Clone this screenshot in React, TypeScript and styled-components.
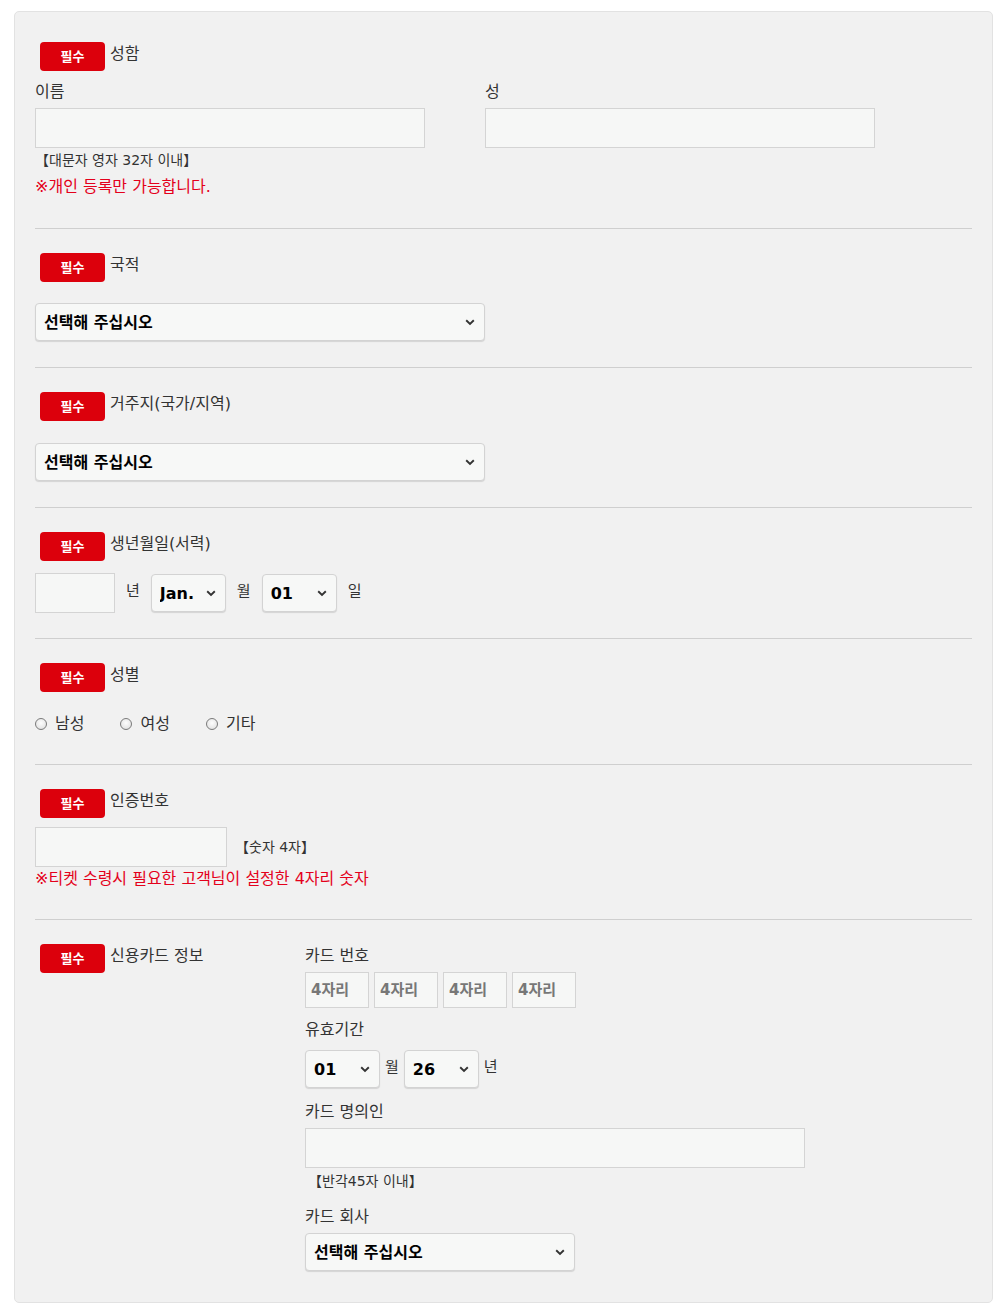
import React from "react";
import styled, { createGlobalStyle } from "styled-components";

const GlobalStyle = createGlobalStyle`
  body {
    margin: 0;
    background: #fff;
    font-family: "DejaVu Sans", "Noto Sans CJK KR", sans-serif;
    color: #333;
  }
`;

const Panel = styled.div`
  margin: 11px 10px 7px 14px;
  background: #f1f1f1;
  border: 1px solid #e2e2e2;
  border-radius: 5px;
  padding: 30px 20px 31px;
`;

const Section = styled.section<{ $top?: number; $bottom?: number }>`
  padding: ${(p) => p.$top ?? 24}px 0 ${(p) => p.$bottom ?? 26}px;
  border-bottom: 1px solid #cfcfcf;

  &:first-child {
    padding-top: 0;
  }
  &:last-child {
    border-bottom: none;
    padding-bottom: 0;
  }
`;

const Heading = styled.div`
  display: flex;
  align-items: flex-start;
  gap: 5px;
  padding-left: 5px;
`;

const Badge = styled.span`
  display: inline-flex;
  align-items: center;
  justify-content: center;
  box-sizing: border-box;
  width: 65px;
  height: 29px;
  padding-bottom: 2px;
  border-radius: 4px;
  background: #dc000c;
  color: #fff;
  font-size: 13px;
  font-weight: bold;
`;

const HeadingText = styled.span`
  font-size: 16px;
  line-height: 24px;
  color: #333;
`;

const Columns = styled.div`
  display: flex;
  gap: 60px;
`;

const Field = styled.div<{ $mt?: number }>`
  margin-top: ${(p) => p.$mt ?? 0}px;
`;

const Label = styled.div<{ $mt?: number }>`
  margin-top: ${(p) => p.$mt ?? 0}px;
  font-size: 16px;
  line-height: 20px;
  color: #333;
`;

const TextBox = styled.input<{ $w: number; $h?: number; $mt?: number }>`
  display: block;
  box-sizing: border-box;
  width: ${(p) => p.$w}px;
  height: ${(p) => p.$h ?? 40}px;
  margin-top: ${(p) => p.$mt ?? 0}px;
  background: #f6f7f6;
  border: 1px solid #d4d4d4;
  border-radius: 0;
  padding: 0 5px;
  font-family: inherit;
  font-size: 15px;
  font-weight: bold;
  color: #333;
  outline: none;

  &::placeholder {
    color: #777;
  }
`;

const Hint = styled.div<{ $mt?: number; $pl?: number }>`
  margin-top: ${(p) => p.$mt ?? 0}px;
  padding-left: ${(p) => p.$pl ?? 0}px;
  font-size: 14px;
  line-height: 20px;
  color: #333;
`;

const Notice = styled.div<{ $mt?: number }>`
  margin-top: ${(p) => p.$mt ?? 0}px;
  font-size: 16px;
  line-height: 20px;
  color: #e4001b;
`;

const SelectWrap = styled.div<{ $w: number; $mt?: number }>`
  position: relative;
  width: ${(p) => p.$w}px;
  height: 38px;
  margin-top: ${(p) => p.$mt ?? 0}px;
  flex: none;
`;

const SelectBox = styled.select`
  appearance: none;
  box-sizing: border-box;
  width: 100%;
  height: 100%;
  background: #f7f8f7;
  border: 1px solid #d3d3d3;
  border-radius: 4px;
  box-shadow: 0 1px 1px rgba(0, 0, 0, 0.12);
  padding: 0 24px 0 8px;
  font-family: inherit;
  font-size: 16px;
  font-weight: bold;
  color: #000;
  outline: none;
`;

const Chevron = styled.svg`
  position: absolute;
  right: 10px;
  top: 50%;
  margin-top: -3px;
  pointer-events: none;
`;

const Row = styled.div<{ $gap: number; $mt?: number }>`
  display: flex;
  align-items: center;
  gap: ${(p) => p.$gap}px;
  margin-top: ${(p) => p.$mt ?? 0}px;
`;

const Unit = styled.span`
  font-size: 15px;
  line-height: 20px;
  color: #333;
  margin-top: -4px;
`;

const RadioRow = styled.div`
  display: flex;
  gap: 36px;
  margin-top: 22px;
  line-height: 20px;
`;

const RadioItem = styled.label`
  display: flex;
  align-items: center;
  gap: 8px;
  font-size: 16px;
  color: #333;
`;

const RadioDot = styled.span`
  box-sizing: border-box;
  width: 12px;
  height: 12px;
  border-radius: 50%;
  border: 1px solid #7a7a7a;
  background: radial-gradient(circle at 50% 40%, #fdfdfd, #dcdcdc);
`;

const CardGrid = styled.div`
  display: grid;
  grid-template-columns: 270px 1fr;
`;

function Select({ value, width, mt }: { value: string; width: number; mt?: number }) {
  return (
    <SelectWrap $w={width} $mt={mt}>
      <SelectBox defaultValue={value}>
        <option>{value}</option>
      </SelectBox>
      <Chevron width="10" height="7" viewBox="0 0 10 7">
        <path d="M1.2 1.3 L5 5 L8.8 1.3" fill="none" stroke="#333" strokeWidth="1.9" />
      </Chevron>
    </SelectWrap>
  );
}

function Head({ text }: { text: string }) {
  return (
    <Heading>
      <Badge>필수</Badge>
      <HeadingText>{text}</HeadingText>
    </Heading>
  );
}

export default function App() {
  return (
    <>
      <GlobalStyle />
      <Panel>
        <Section $bottom={31}>
          <Head text="성함" />
          <Columns>
            <Field>
              <Label $mt={11}>이름</Label>
              <TextBox $w={390} $mt={6} />
            </Field>
            <Field>
              <Label $mt={11}>성</Label>
              <TextBox $w={390} $mt={6} />
            </Field>
          </Columns>
          <Hint $mt={2}>【대문자 영자 32자 이내】</Hint>
          <Notice $mt={7}>※개인 등록만 가능합니다.</Notice>
        </Section>

        <Section>
          <Head text="국적" />
          <Select value="선택해 주십시오" width={450} mt={21} />
        </Section>

        <Section>
          <Head text="거주지(국가/지역)" />
          <Select value="선택해 주십시오" width={450} mt={22} />
        </Section>

        <Section $bottom={25}>
          <Head text="생년월일(서력)" />
          <Row $gap={11} $mt={12}>
            <TextBox $w={80} />
            <Unit>년</Unit>
            <Select value="Jan." width={75} />
            <Unit>월</Unit>
            <Select value="01" width={75} />
            <Unit>일</Unit>
          </Row>
        </Section>

        <Section $bottom={30}>
          <Head text="성별" />
          <RadioRow>
            <RadioItem>
              <RadioDot />
              남성
            </RadioItem>
            <RadioItem>
              <RadioDot />
              여성
            </RadioItem>
            <RadioItem>
              <RadioDot />
              기타
            </RadioItem>
          </RadioRow>
        </Section>

        <Section $bottom={30}>
          <Head text="인증번호" />
          <Row $gap={8} $mt={9}>
            <TextBox $w={192} />
            <Hint>【숫자 4자】</Hint>
          </Row>
          <Notice $mt={2}>※티켓 수령시 필요한 고객님이 설정한 4자리 숫자</Notice>
        </Section>

        <Section>
          <CardGrid>
            <Head text="신용카드 정보" />
            <div>
              <Label $mt={2}>카드 번호</Label>
              <Row $gap={5} $mt={6}>
                <TextBox $w={64} $h={36} placeholder="4자리" />
                <TextBox $w={64} $h={36} placeholder="4자리" />
                <TextBox $w={64} $h={36} placeholder="4자리" />
                <TextBox $w={64} $h={36} placeholder="4자리" />
              </Row>
              <Label $mt={12}>유효기간</Label>
              <Row $gap={5} $mt={10}>
                <Select value="01" width={75} />
                <Unit>월</Unit>
                <Select value="26" width={75} />
                <Unit>년</Unit>
              </Row>
              <Label $mt={14}>카드 명의인</Label>
              <TextBox $w={500} $mt={6} />
              <Hint $mt={3} $pl={3}>【반각45자 이내】</Hint>
              <Label $mt={16}>카드 회사</Label>
              <Select value="선택해 주십시오" width={270} mt={6} />
            </div>
          </CardGrid>
        </Section>
      </Panel>
    </>
  );
}
